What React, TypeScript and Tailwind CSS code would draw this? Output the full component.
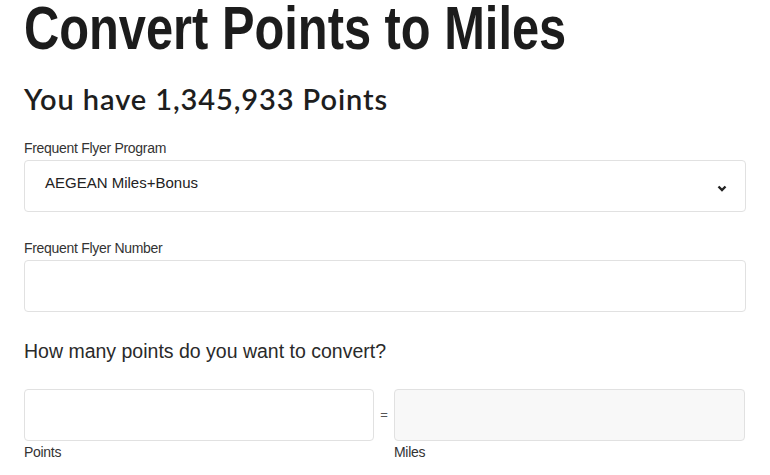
export default function App() {
  return (
    <div className="min-h-[475px] bg-white px-6 text-[#222] font-['Liberation_Sans',Arial,sans-serif]">
      <h1 className="h-[56px] text-[62px] leading-[56px] font-bold text-[#1c1c1c] whitespace-nowrap">
        <span className="inline-block origin-left scale-x-[0.787]">Convert Points to Miles</span>
      </h1>
      <h2 className="mt-[25px] text-[29px] leading-[36px] font-semibold tracking-[0.9px] text-[#1e1e1e] font-['Lato','Liberation_Sans',sans-serif]">
        You have 1,345,933 Points
      </h2>

      <div className="mt-[23px]">
        <label className="block text-[14px] leading-[16px] tracking-[-0.3px] text-[#333]">Frequent Flyer Program</label>
        <div className="mt-[4px] flex h-[52px] items-center justify-between rounded-[4px] border border-[#e1e1e1] pl-5 pr-[18px]">
          <span className="pb-[6px] text-[15px] text-[#222]">AEGEAN Miles+Bonus</span>
          <svg width="10" height="7" viewBox="0 0 10 7" className="mt-[4px]">
            <path d="M1.5 1.5 L5 5 L8.5 1.5" fill="none" stroke="#222" strokeWidth="2.4" />
          </svg>
        </div>
      </div>

      <div className="mt-[28px]">
        <label className="block text-[14px] leading-[16px] tracking-[-0.3px] text-[#333]">Frequent Flyer Number</label>
        <div className="mt-[4px] h-[52px] rounded-[4px] border border-[#e1e1e1]" />
      </div>

      <p className="mt-[28px] text-[19.5px] leading-[22px] text-[#2a2a2a]">How many points do you want to convert?</p>

      <div className="mt-[27px] flex items-start">
        <div className="w-[350px]">
          <div className="h-[52px] rounded-[4px] border border-[#e1e1e1]" />
          <div className="mt-[3px] text-[14px] leading-[16px] tracking-[-0.3px] text-[#333]">Points</div>
        </div>
        <div className="flex h-[52px] w-[20px] items-center justify-center text-[13px] text-[#555]">=</div>
        <div className="w-[351px]">
          <div className="h-[52px] rounded-[4px] border border-[#e1e1e1] bg-[#f8f8f8]" />
          <div className="mt-[3px] text-[14px] leading-[16px] tracking-[-0.3px] text-[#333]">Miles</div>
        </div>
      </div>
    </div>
  );
}
